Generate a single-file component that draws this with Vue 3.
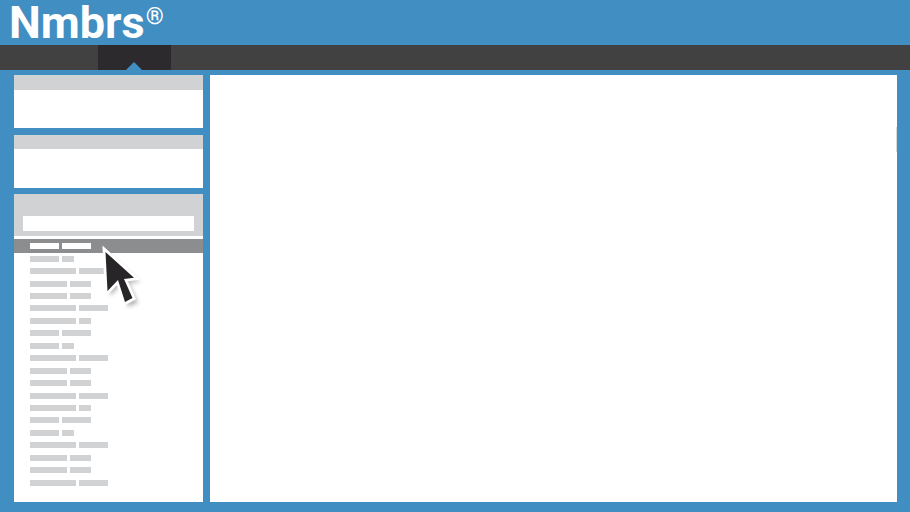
<script setup>
// Breedtes van de placeholder balken per rij, het patroon herhaalt zich
const pattern = [
  [29, 12],
  [46, 29],
  [37, 21],
  [37, 21],
  [46, 29],
  [46, 12],
  [29, 29]
]

const rows = []
for (let i = 0; i < 19; i++) {
  rows.push({ id: i, bars: pattern[i % pattern.length] })
}
</script>

<template>
  <div class="page">
    <header class="top">
      <span class="logo">Nmbrs<sup>®</sup></span>
    </header>

    <nav class="nav">
      <div class="nav-active"></div>
    </nav>

    <div class="content">
      <aside class="side">
        <section class="card">
          <div class="card-head"></div>
        </section>
        <section class="card">
          <div class="card-head"></div>
        </section>

        <section class="card list-card">
          <div class="search-head">
            <div class="search"></div>
          </div>
          <div class="row-selected">
            <span class="bar-white"></span>
            <span class="bar-white"></span>
          </div>
          <div class="rows">
            <div v-for="row in rows" :key="row.id" class="row">
              <span class="bar" :style="{ width: row.bars[0] + 'px' }"></span>
              <span class="bar" :style="{ width: row.bars[1] + 'px' }"></span>
            </div>
          </div>

          <svg class="cursor" width="50" height="74" viewBox="0 0 50 74">
            <defs>
              <filter id="soft" x="-30%" y="-30%" width="160%" height="160%">
                <feGaussianBlur stdDeviation="2.2" />
              </filter>
            </defs>
            <path d="M11 18 L13 60 L24 49 L31 71 L41 67 L32 47 L43 46 Z" fill="#000" opacity="0.28" filter="url(#soft)" />
            <path d="M8.5 16 L10.5 55 L21 44 L28 66 L35.5 62 L27 43 L37 41.7 Z" fill="#fff" stroke="#fff" stroke-width="5.5" stroke-linejoin="miter" stroke-miterlimit="6" />
            <path d="M8.5 16 L10.5 55 L21 44 L28 66 L35.5 62 L27 43 L37 41.7 Z" fill="#272528" />
          </svg>
        </section>
      </aside>

      <main class="main">
        <div class="scroll-grip"></div>
      </main>
    </div>
  </div>
</template>

<style>
html,
body {
  margin: 0;
  background: #418ec3;
}
</style>

<style scoped>
.page {
  width: 910px;
  height: 512px;
  overflow: hidden;
  background: #418ec3;
}

.top {
  height: 45px;
  padding: 1px 0 0 9px;
  box-sizing: border-box;
}

.logo {
  display: block;
  color: #ffffff;
  font-family: Roboto, sans-serif;
  font-size: 45px;
  font-weight: 700;
  line-height: 44px;
}

.logo sup {
  margin-left: 1px;
  font-size: 23px;
  line-height: 0;
  vertical-align: 14px;
  font-weight: 700;
}

.nav {
  height: 25px;
  background: #414141;
  padding-left: 98px;
}

.nav-active {
  position: relative;
  width: 73px;
  height: 25px;
  background: #2c2a2d;
}

/* Blauw pijltje onder het actieve menu item */
.nav-active::after {
  content: "";
  position: absolute;
  left: 28px;
  bottom: 0;
  border-left: 8.5px solid transparent;
  border-right: 8.5px solid transparent;
  border-bottom: 8px solid #418ec3;
}

.content {
  display: flex;
  gap: 7px;
  padding: 5px 13px 10px 14px;
  height: 442px;
  box-sizing: border-box;
}

.side {
  width: 189px;
  display: flex;
  flex-direction: column;
  gap: 6.5px;
}

.card {
  height: 53px;
  background: #ffffff;
}

.card-head {
  height: 14.5px;
  background: #d1d2d4;
}

.list-card {
  position: relative;
  flex: 1;
}

.search-head {
  height: 42px;
  padding: 22px 9px 0;
  box-sizing: border-box;
  background: #d1d2d4;
}

.search {
  height: 15px;
  background: #ffffff;
}

.row-selected {
  display: flex;
  align-items: center;
  gap: 3.3px;
  height: 14px;
  margin-top: 3px;
  padding-left: 15.7px;
  background: #8c8d8f;
}

.bar-white {
  width: 29px;
  height: 6px;
  background: #ffffff;
}

.rows {
  padding-top: 2.7px;
}

.row {
  display: flex;
  align-items: flex-start;
  gap: 3.3px;
  height: 12.45px;
  padding-left: 15.7px;
}

.bar {
  height: 6px;
  background: #d1d2d4;
}

.cursor {
  position: absolute;
  left: 82.5px;
  top: 42px;
}

.main {
  position: relative;
  flex: 1;
  background: #ffffff;
}

.scroll-grip {
  position: absolute;
  right: 0;
  top: 52px;
  width: 1.5px;
  height: 25px;
  background: #d8d9da;
}
</style>
